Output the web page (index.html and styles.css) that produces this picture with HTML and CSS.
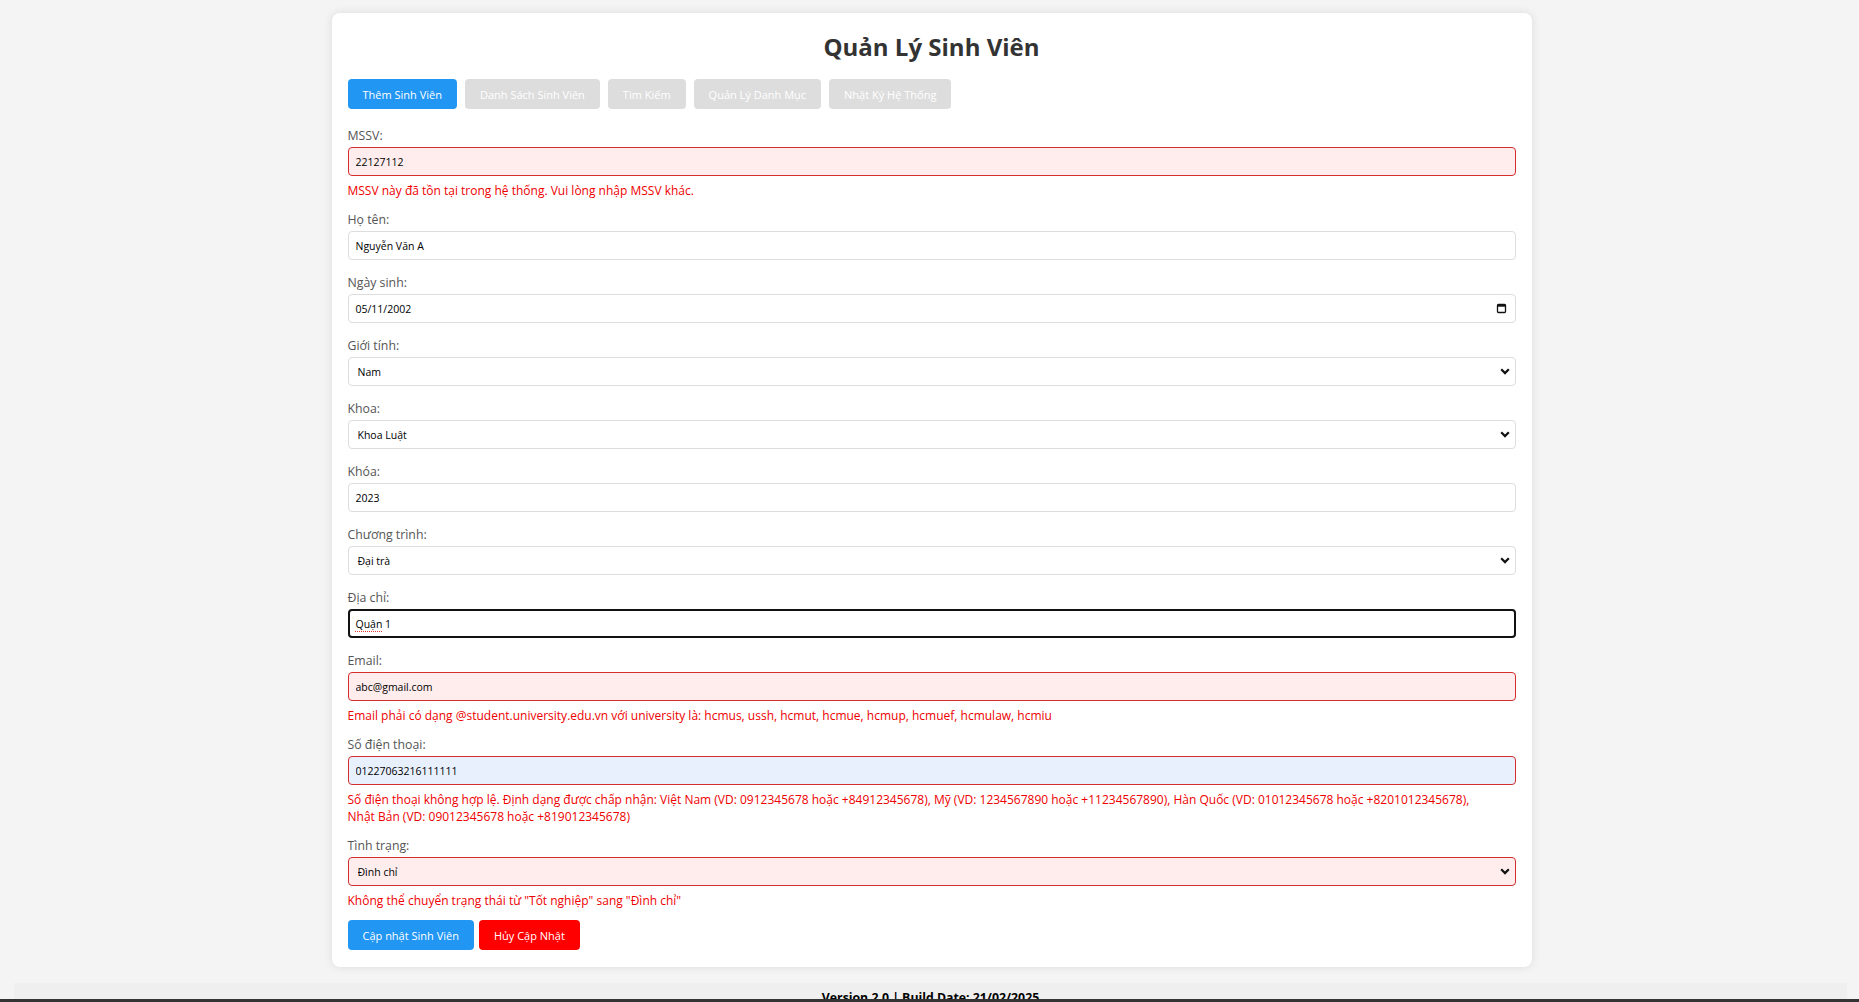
FILE: index.html
```html
<!DOCTYPE html>
<html lang="vi">
<head>
<meta charset="utf-8">
<title>Quản Lý Sinh Viên</title>
<link rel="stylesheet" href="styles.css">
</head>
<body>
<div class="container">
  <h1 class="title">Quản Lý Sinh Viên</h1>
  <div class="tabs">
    <button class="tab active">Thêm Sinh Viên</button>
    <button class="tab">Danh Sách Sinh Viên</button>
    <button class="tab">Tìm Kiếm</button>
    <button class="tab">Quản Lý Danh Mục</button>
    <button class="tab">Nhật Ký Hệ Thống</button>
  </div>
  <form class="form">
    <div class="group">
      <label class="label">MSSV:</label>
      <input class="input invalid" type="text" value="22127112">
      <div class="error">MSSV này đã tồn tại trong hệ thống. Vui lòng nhập MSSV khác.</div>
    </div>
    <div class="group">
      <label class="label">Họ tên:</label>
      <input class="input" type="text" value="Nguyễn Văn A">
    </div>
    <div class="group">
      <label class="label">Ngày sinh:</label>
      <div class="input date">
        <span>05/11/2002</span>
        <svg class="cal" width="11" height="11" viewBox="0 0 11 11"><rect x="1.5" y="1.5" width="8" height="8" rx="1" fill="none" stroke="#111" stroke-width="1.3"/><rect x="1.5" y="1.5" width="8" height="2.2" fill="#111"/></svg>
      </div>
    </div>
    <div class="group">
      <label class="label">Giới tính:</label>
      <div class="select-wrap">
        <select class="input select"><option>Nam</option></select>
        <svg class="chev" width="10" height="7" viewBox="0 0 10 7"><path d="M1.2 1.3 L5 5.1 L8.8 1.3" fill="none" stroke="#111" stroke-width="2.2"/></svg>
      </div>
    </div>
    <div class="group">
      <label class="label">Khoa:</label>
      <div class="select-wrap">
        <select class="input select"><option>Khoa Luật</option></select>
        <svg class="chev" width="10" height="7" viewBox="0 0 10 7"><path d="M1.2 1.3 L5 5.1 L8.8 1.3" fill="none" stroke="#111" stroke-width="2.2"/></svg>
      </div>
    </div>
    <div class="group">
      <label class="label">Khóa:</label>
      <input class="input" type="text" value="2023">
    </div>
    <div class="group">
      <label class="label">Chương trình:</label>
      <div class="select-wrap">
        <select class="input select"><option>Đại trà</option></select>
        <svg class="chev" width="10" height="7" viewBox="0 0 10 7"><path d="M1.2 1.3 L5 5.1 L8.8 1.3" fill="none" stroke="#111" stroke-width="2.2"/></svg>
      </div>
    </div>
    <div class="group">
      <label class="label">Địa chỉ:</label>
      <div class="input focused"><span class="spell">Quận</span>&nbsp;1</div>
    </div>
    <div class="group">
      <label class="label">Email:</label>
      <input class="input invalid" type="text" value="abc@gmail.com">
      <div class="error">Email phải có dạng @student.university.edu.vn với university là: hcmus, ussh, hcmut, hcmue, hcmup, hcmuef, hcmulaw, hcmiu</div>
    </div>
    <div class="group">
      <label class="label">Số điện thoại:</label>
      <input class="input invalid autofill" type="text" value="01227063216111111">
      <div class="error">Số điện thoại không hợp lệ. Định dạng được chấp nhận: Việt Nam (VD: 0912345678 hoặc +84912345678), Mỹ (VD: 1234567890 hoặc +11234567890), Hàn Quốc (VD: 01012345678 hoặc +8201012345678),<br>Nhật Bản (VD: 09012345678 hoặc +819012345678)</div>
    </div>
    <div class="group">
      <label class="label">Tình trạng:</label>
      <div class="select-wrap">
        <select class="input select invalid"><option>Đình chỉ</option></select>
        <svg class="chev" width="10" height="7" viewBox="0 0 10 7"><path d="M1.2 1.3 L5 5.1 L8.8 1.3" fill="none" stroke="#111" stroke-width="2.2"/></svg>
      </div>
      <div class="error">Không thể chuyển trạng thái từ "Tốt nghiệp" sang "Đình chỉ"</div>
    </div>
    <div class="actions">
      <button type="button" class="btn btn-primary">Cập nhật Sinh Viên</button>
      <button type="button" class="btn btn-danger">Hủy Cập Nhật</button>
    </div>
  </form>
</div>
<footer class="footer">Version 2.0 | Build Date: 21/02/2025</footer>
<div class="bottom-bar"></div>
</body>
</html>
```

FILE: styles.css
```css
html, body {
  margin: 0;
  padding: 0;
}
body {
  padding-left: 4px;
  background: #f4f4f4;
  font-family: "Open Sans", "Noto Sans", sans-serif;
  color: #333;
}
.container {
  width: 1200px;
  box-sizing: border-box;
  margin: 13px auto 0;
  padding: 18px 16px 17px;
  background: #fff;
  border-radius: 8px;
  box-shadow: 0 0 10px rgba(0, 0, 0, 0.1);
}
.title {
  margin: 0 0 16px;
  font-size: 24px;
  line-height: 32px;
  font-weight: 700;
  text-align: center;
  color: #333;
}
.tabs {
  display: flex;
  gap: 8px;
  margin-bottom: 17px;
}
.tab {
  height: 30px;
  padding: 0 15px;
  border: none;
  border-radius: 4px;
  background: #ddd;
  color: #fff;
  font-family: "Open Sans", "Noto Sans", sans-serif;
  font-size: 11px;
}
.tab.active {
  background: #2196f3;
}
.form {
  margin: 0;
}
.group {
  margin-bottom: 13px;
}
.label {
  display: block;
  font-size: 12.3px;
  line-height: 17px;
  padding-top: 1px;
  margin-bottom: 3px;
  color: #555;
}
.input {
  display: block;
  width: 100%;
  box-sizing: border-box;
  height: 29px;
  margin: 0;
  padding: 0 7px;
  border: 1px solid #ddd;
  border-radius: 4px;
  background: #fff;
  color: #000;
  font-family: "Open Sans", "Noto Sans", sans-serif;
  font-size: 10.5px;
  outline: none;
}
.input.invalid {
  border-color: #d32f2f;
  background: #ffeded;
}
.input.autofill {
  background: #e8f0fe;
}
.date {
  display: flex;
  align-items: center;
  justify-content: space-between;
  padding-right: 8px;
}
.cal {
  display: block;
}
.focused {
  display: flex;
  align-items: center;
  border: 2px solid #111;
  padding-left: 6px;
}
.spell {
  text-decoration: underline dotted #e53935;
  text-underline-offset: 3px;
}
.select-wrap {
  position: relative;
}
.select {
  appearance: none;
  -webkit-appearance: none;
  padding-left: 9px;
}
.chev {
  position: absolute;
  right: 6px;
  top: 11px;
  pointer-events: none;
}
.error {
  color: #e00;
  font-size: 12px;
  line-height: 17px;
  margin-top: 6px;
  margin-bottom: -2px;
}
.actions {
  display: flex;
  gap: 5px;
}
.btn {
  height: 30px;
  padding: 0 15px;
  border: none;
  border-radius: 4px;
  color: #fff;
  font-family: "Open Sans", "Noto Sans", sans-serif;
  font-size: 11px;
}
.btn-primary {
  background: #2196f3;
}
.btn-danger {
  background: #ff0000;
}
.footer {
  margin: 16px 12px 0 10px;
  padding: 6px 0 8px;
  background: #efefef;
  text-align: center;
  font-size: 12.3px;
  font-weight: 700;
  color: #000;
}
.bottom-bar {
  position: fixed;
  left: 0;
  right: 0;
  bottom: 0;
  height: 3px;
  background: #333;
}
```
